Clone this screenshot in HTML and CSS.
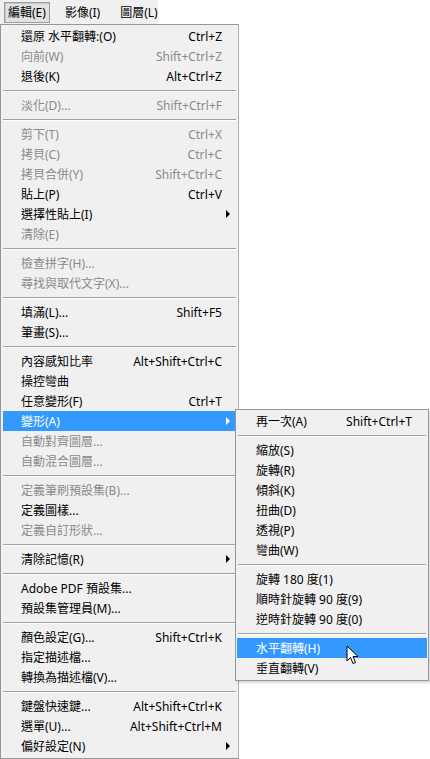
FILE: index.html
```html
<!DOCTYPE html>
<html lang="zh-Hant">
<head>
    <meta charset="UTF-8">
    <meta name="viewport" content="width=device-width, initial-scale=1.0">
    <title>編輯選單</title>
    <link rel="stylesheet" href="styles.css">
</head>
<body>
    <!-- Menu bar -->
    <div class="menubar">
        <span class="bar-item pressed">編輯(E)</span>
        <span class="bar-item">影像(I)</span>
        <span class="bar-item">圖層(L)</span>
    </div>

    <!-- Edit menu -->
    <div class="menu main-menu">
        <div class="item"><span>還原 水平翻轉:(O)</span><span class="key">Ctrl+Z</span></div>
        <div class="item off"><span>向前(W)</span><span class="key">Shift+Ctrl+Z</span></div>
        <div class="item"><span>退後(K)</span><span class="key">Alt+Ctrl+Z</span></div>
        <div class="sep"></div>
        <div class="item off"><span>淡化(D)...</span><span class="key">Shift+Ctrl+F</span></div>
        <div class="sep"></div>
        <div class="item off"><span>剪下(T)</span><span class="key">Ctrl+X</span></div>
        <div class="item off"><span>拷貝(C)</span><span class="key">Ctrl+C</span></div>
        <div class="item off"><span>拷貝合併(Y)</span><span class="key">Shift+Ctrl+C</span></div>
        <div class="item"><span>貼上(P)</span><span class="key">Ctrl+V</span></div>
        <div class="item sub"><span>選擇性貼上(I)</span></div>
        <div class="item off"><span>清除(E)</span></div>
        <div class="sep"></div>
        <div class="item off"><span>檢查拼字(H)...</span></div>
        <div class="item off"><span>尋找與取代文字(X)...</span></div>
        <div class="sep"></div>
        <div class="item"><span>填滿(L)...</span><span class="key">Shift+F5</span></div>
        <div class="item"><span>筆畫(S)...</span></div>
        <div class="sep"></div>
        <div class="item"><span>內容感知比率</span><span class="key">Alt+Shift+Ctrl+C</span></div>
        <div class="item"><span>操控彎曲</span></div>
        <div class="item"><span>任意變形(F)</span><span class="key">Ctrl+T</span></div>
        <div class="item sub active"><span>變形(A)</span></div>
        <div class="item off"><span>自動對齊圖層...</span></div>
        <div class="item off"><span>自動混合圖層...</span></div>
        <div class="sep"></div>
        <div class="item off"><span>定義筆刷預設集(B)...</span></div>
        <div class="item"><span>定義圖樣...</span></div>
        <div class="item off"><span>定義自訂形狀...</span></div>
        <div class="sep"></div>
        <div class="item sub"><span>清除記憶(R)</span></div>
        <div class="sep"></div>
        <div class="item"><span>Adobe PDF 預設集...</span></div>
        <div class="item"><span>預設集管理員(M)...</span></div>
        <div class="sep"></div>
        <div class="item"><span>顏色設定(G)...</span><span class="key">Shift+Ctrl+K</span></div>
        <div class="item"><span>指定描述檔...</span></div>
        <div class="item"><span>轉換為描述檔(V)...</span></div>
        <div class="sep"></div>
        <div class="item"><span>鍵盤快速鍵...</span><span class="key">Alt+Shift+Ctrl+K</span></div>
        <div class="item"><span>選單(U)...</span><span class="key">Alt+Shift+Ctrl+M</span></div>
        <div class="item sub"><span>偏好設定(N)</span></div>
    </div>

    <!-- Transform submenu -->
    <div class="menu sub-menu">
        <div class="item"><span>再一次(A)</span><span class="key">Shift+Ctrl+T</span></div>
        <div class="sep"></div>
        <div class="item"><span>縮放(S)</span></div>
        <div class="item"><span>旋轉(R)</span></div>
        <div class="item"><span>傾斜(K)</span></div>
        <div class="item"><span>扭曲(D)</span></div>
        <div class="item"><span>透視(P)</span></div>
        <div class="item"><span>彎曲(W)</span></div>
        <div class="sep"></div>
        <div class="item"><span>旋轉 180 度(1)</span></div>
        <div class="item"><span>順時針旋轉 90 度(9)</span></div>
        <div class="item"><span>逆時針旋轉 90 度(0)</span></div>
        <div class="sep"></div>
        <div class="item active"><span>水平翻轉(H)</span></div>
        <div class="item"><span>垂直翻轉(V)</span></div>
    </div>

    <!-- Mouse pointer -->
    <svg class="pointer" width="14" height="21" viewBox="0 0 14 21">
        <path d="M1 1 L1 16 L4.5 12.5 L7 18.5 L9.5 17.5 L7 11.5 L12 11.5 Z" fill="#fff" stroke="#000" stroke-width="1" stroke-linejoin="miter"/>
    </svg>
</body>
</html>
```

FILE: styles.css
```css
body {
    margin: 0;
    background-color: #fff;
    font-family: "Noto Sans", "Noto Sans CJK TC", sans-serif;
    font-size: 12px;
    color: #000;
    position: relative;
    height: 759px;
    overflow: hidden;
}

/* menu bar */
.menubar {
    width: 158px;
    height: 24px;
    background-color: #f0f0f0;
    display: flex;
    align-items: center;
    padding-left: 4px;
    box-sizing: border-box;
}
.bar-item {
    flex-shrink: 0;
    white-space: nowrap;
    height: 19px;
    line-height: 19px;
    padding: 0 4px;
    margin-right: 10px;
    border: 1px solid transparent;
}
.bar-item.pressed {
    background-color: #e1e1e1;
    border-color: #9c9c9c;
    box-shadow: inset 1px 1px 0 #c8c8c8;
    padding: 0 3px;
}

/* menus */
.menu {
    background-color: #f0f0f0;
    border: 1px solid #979797;
    box-sizing: border-box;
    padding: 1px 1px;
}
.main-menu {
    width: 239px;
    height: 735px;
    border-right-color: #b0b0b0;
}
.sub-menu {
    position: absolute;
    left: 235px;
    top: 409px;
    width: 194px;
    height: 272px;
    box-shadow: 2px 2px 2px rgba(0, 0, 0, 0.15);
}

.item {
    height: 20px;
    line-height: 21px;
    display: flex;
    justify-content: space-between;
    padding: 0 15px 0 19px;
    white-space: nowrap;
    position: relative;
}
.item.off {
    color: #8a8a8a;
}
.item.active {
    background-color: #3399ff;
    color: #fff;
    margin: 0 1px;
    padding-left: 18px;
}
.sub-menu .item.active {
    margin: 0;
    padding-left: 19px;
}

/* submenu arrow */
.item.sub::after {
    content: "";
    position: absolute;
    right: 7px;
    top: 6px;
    border-left: 4px solid #000;
    border-top: 4px solid transparent;
    border-bottom: 4px solid transparent;
}
.item.sub.active::after {
    border-left-color: #fff;
    right: 6px;
}

.sep {
    height: 0;
    margin: 4px 1px 3px;
    border-top: 1px solid #a0a0a0;
    border-bottom: 1px solid #fff;
}

.pointer {
    position: absolute;
    left: 346px;
    top: 645px;
}
```
